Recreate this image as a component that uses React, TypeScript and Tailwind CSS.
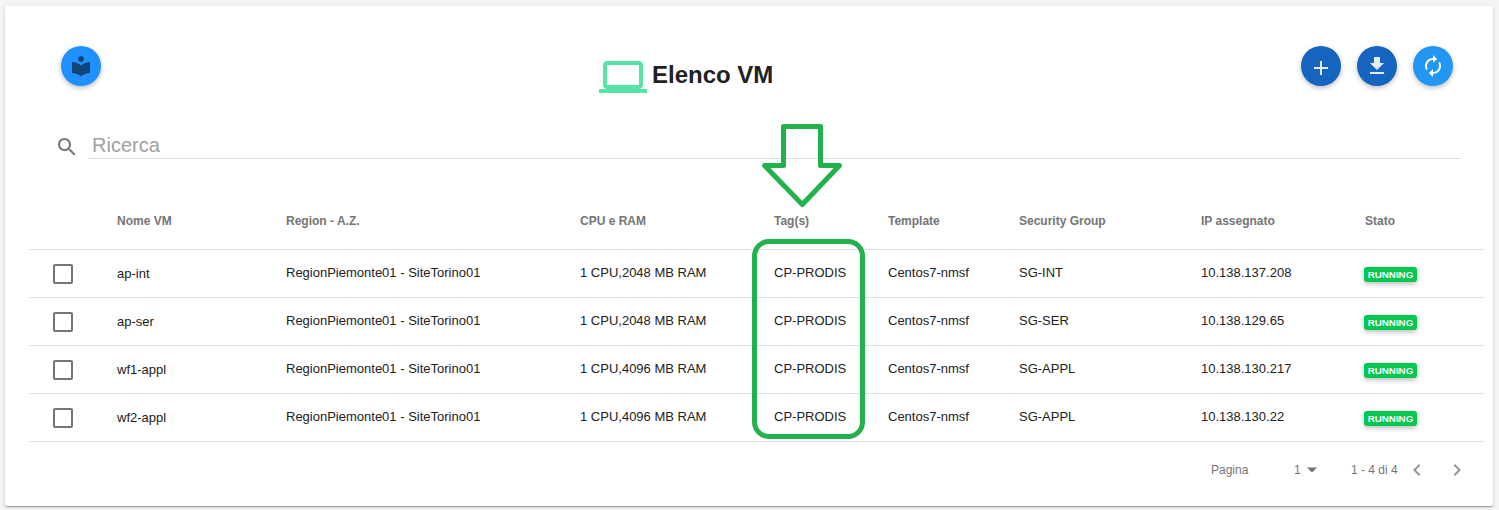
import React from "react";

const rows = [
  { name: "ap-int", cpu: "1 CPU,2048 MB RAM", sg: "SG-INT", ip: "10.138.137.208" },
  { name: "ap-ser", cpu: "1 CPU,2048 MB RAM", sg: "SG-SER", ip: "10.138.129.65" },
  { name: "wf1-appl", cpu: "1 CPU,4096 MB RAM", sg: "SG-APPL", ip: "10.138.130.217" },
  { name: "wf2-appl", cpu: "1 CPU,4096 MB RAM", sg: "SG-APPL", ip: "10.138.130.22" },
];

const gridCols = "grid grid-cols-[88px_169px_294px_194px_114px_131px_182px_163px_1fr]";

function Icon({ d, className }: { d: string; className: string }) {
  return (
    <svg viewBox="0 0 24 24" fill="currentColor" className={className}>
      <path d={d} />
    </svg>
  );
}

function Fab({ className, children }: { className: string; children: React.ReactNode }) {
  return (
    <button
      className={
        "flex h-10 w-10 shrink-0 items-center justify-center rounded-full shadow-[0_2px_5px_rgba(0,0,0,0.26)] " + className
      }
    >
      {children}
    </button>
  );
}

export default function App() {
  return (
    <div className="h-[510px] bg-[#f4f4f4] pt-1.5 pl-[5px] font-['Liberation_Sans',Arial,sans-serif]">
      <div className="relative flex h-[500px] w-[1488px] flex-col rounded-[2px] bg-white shadow-[0_1px_3px_rgba(0,0,0,0.2),0_1px_1px_rgba(0,0,0,0.14),0_2px_1px_-1px_rgba(0,0,0,0.12)]">
        <header className="flex items-start pt-10 pr-10 pl-14">
          <Fab className="bg-[#1e90ff] text-[#114478]">
            <Icon
              className="h-6 w-6"
              d="M12 11.55C9.64 9.35 6.48 8 3 8v11c3.48 0 6.64 1.35 9 3.55 2.36-2.19 5.52-3.55 9-3.55V8c-3.48 0-6.64 1.35-9 3.55zM12 8c1.66 0 3-1.34 3-3s-1.34-3-3-3-3 1.34-3 3 1.34 3 3 3z"
            />
          </Fab>
          <h1 className="mt-[7px] ml-[498px] flex text-2xl leading-[44px] font-bold text-[#212121]">
            <Icon
              className="mr-[5px] h-12 w-12 text-[#58e3a7]"
              d="M20 18c1.1 0 1.99-.9 1.99-2L22 6c0-1.1-.9-2-2-2H4c-1.1 0-2 .9-2 2v10c0 1.1.9 2 2 2H0v2h24v-2h-4zM4 6h16v10H4V6z"
            />
            Elenco VM
          </h1>
          <div className="ml-auto flex gap-4">
            <Fab className="bg-[#1565c0] text-[#e4ecf7]">
              <Icon className="mt-1 h-6 w-6" d="M19 13h-6v6h-2v-6H5v-2h6V5h2v6h6z" />
            </Fab>
            <Fab className="bg-[#1565c0] text-[#e4ecf7]">
              <Icon className="h-6 w-6" d="M19 9h-4V3H9v6H5l7 7 7-7zM5 18v2h14v-2H5z" />
            </Fab>
            <Fab className="bg-[#2196f3] text-white">
              <Icon
                className="h-6 w-6"
                d="M12 6v3l4-4-4-4v3c-4.42 0-8 3.58-8 8 0 1.57.46 3.03 1.24 4.26L6.7 14.8c-.45-.83-.7-1.79-.7-2.8 0-3.31 2.69-6 6-6zm6.76 1.74L17.3 9.2c.44.84.7 1.79.7 2.8 0 3.31-2.69 6-6 6v-3l-4 4 4 4v-3c4.42 0 8-3.58 8-8 0-1.57-.46-3.03-1.24-4.26z"
              />
            </Fab>
          </div>
        </header>

        <div className="mt-[30px] flex h-[28px] pr-8 pl-[50px]">
          <Icon
            className="mt-1 mr-[10px] h-6 w-6 shrink-0 text-[#757575]"
            d="M15.5 14h-.79l-.28-.27C15.41 12.59 16 11.11 16 9.5 16 5.91 13.09 3 9.5 3S3 5.91 3 9.5 5.91 16 9.5 16c1.61 0 3.09-.59 4.23-1.57l.27.28v.79l5 4.99L20.49 19l-4.99-5zm-6 0C7.01 14 5 11.99 5 9.5S7.01 5 9.5 5 14 7.01 14 9.5 11.99 14 9.5 14z"
          />
          <div className="flex-1 border-b border-[#dedede] pl-[3px] text-xl leading-[29px] text-[#a1a1a1]">Ricerca</div>
        </div>

        <div className="mt-[34px] mr-2 ml-6">
          <div className={gridCols + " h-[56px] pt-5 text-xs leading-4 font-bold text-[#757575]"}>
            <span />
            <span>Nome VM</span>
            <span>Region - A.Z.</span>
            <span>CPU e RAM</span>
            <span>Tag(s)</span>
            <span>Template</span>
            <span>Security Group</span>
            <span>IP assegnato</span>
            <span className="pl-px">Stato</span>
          </div>
          {rows.map((r) => (
            <div
              key={r.name}
              className={gridCols + " h-12 border-t border-[#e0e0e0] pt-[14px] text-[13px] leading-[18px] text-[#212121]"}
            >
              <span className="ml-6 h-5 w-5 rounded-[2px] border-2 border-[#757575]" />
              <span className="pt-px">{r.name}</span>
              <span>RegionPiemonte01 - SiteTorino01</span>
              <span>{r.cpu}</span>
              <span>CP-PRODIS</span>
              <span>Centos7-nmsf</span>
              <span>{r.sg}</span>
              <span>{r.ip}</span>
              <span className="mt-[3px] flex h-[15px] w-[53px] items-center justify-center rounded-[3px] bg-[#00c851] text-[9.75px] font-bold text-white shadow-[0_2px_5px_rgba(0,0,0,0.26)]">
                RUNNING
              </span>
            </div>
          ))}
          <div className="flex h-14 items-center border-t border-[#e0e0e0] pl-[1182px] text-xs text-[#757575]">
            <span className="w-[83px]">Pagina</span>
            <span className="w-2">1</span>
            <Icon className="mr-[27px] ml-[-2px] h-6 w-6" d="M7 9.5h10l-5 5z" />
            <span className="w-[54px] whitespace-nowrap">1 - 4 di 4</span>
            <Icon className="h-6 w-6 text-[#959595]" d="M15.41 7.41L14 6l-6 6 6 6 1.41-1.41L10.83 12z" />
            <Icon className="ml-4 h-6 w-6 text-[#959595]" d="M10 6L8.59 7.41 13.17 12l-4.58 4.59L10 18l6-6z" />
          </div>
        </div>

        <svg
          className="pointer-events-none absolute top-[114px] left-[755px] h-[90px] w-[84px]"
          viewBox="0 0 84 90"
          fill="none"
          stroke="#22b14c"
          strokeWidth="5"
          strokeLinejoin="round"
        >
          <path d="M23.5 6.5h37v39h19L42.3 84.5 4.5 45.5h19z" />
        </svg>
        <div className="pointer-events-none absolute top-[233px] left-[747px] h-[200px] w-[113px] rounded-[17px] border-5 border-[#22b14c]" />
      </div>
    </div>
  );
}
